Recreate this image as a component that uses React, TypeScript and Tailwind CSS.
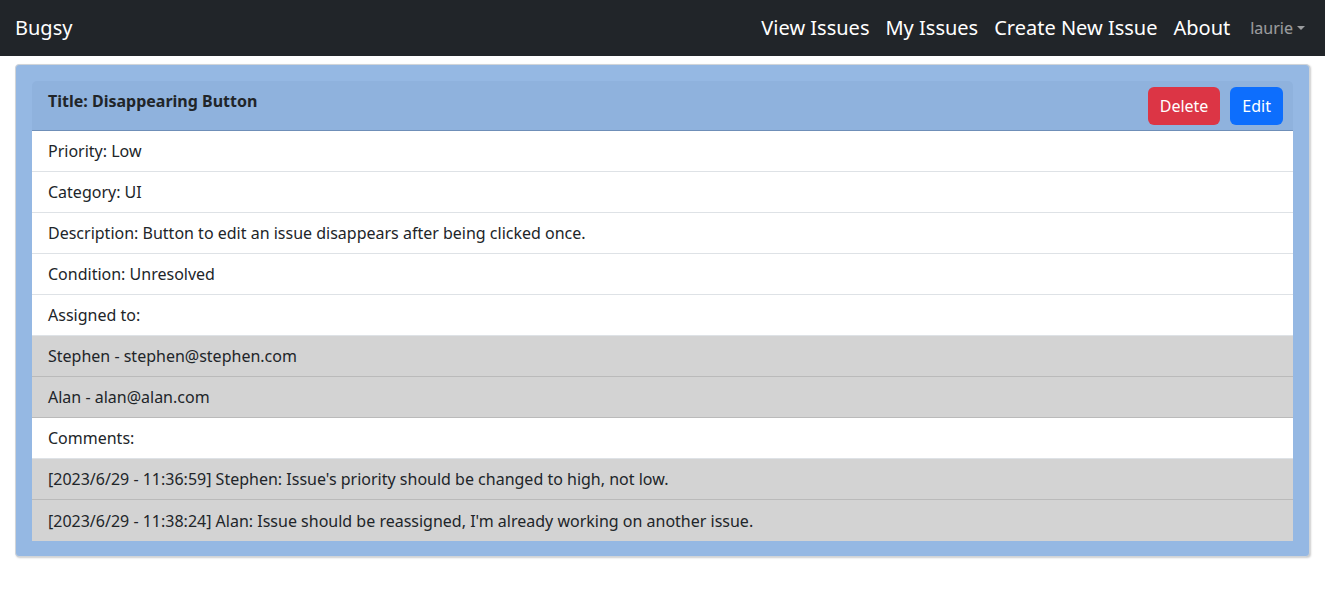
export default function App() {
  const rows: { text: string; grey?: boolean }[] = [
    { text: "Priority: Low" },
    { text: "Category: UI" },
    { text: "Description: Button to edit an issue disappears after being clicked once." },
    { text: "Condition: Unresolved" },
    { text: "Assigned to:" },
    { text: "Stephen - stephen@stephen.com", grey: true },
    { text: "Alan - alan@alan.com", grey: true },
    { text: "Comments:" },
    { text: "[2023/6/29 - 11:36:59] Stephen: Issue's priority should be changed to high, not low.", grey: true },
    { text: "[2023/6/29 - 11:38:24] Alan: Issue should be reassigned, I'm already working on another issue.", grey: true },
  ];

  return (
    <div className="min-h-[590px] bg-white text-[#212529] font-['Noto_Sans',sans-serif] text-base">
      <nav className="h-14 bg-[#212529] flex items-center justify-between pl-[15px] pr-[20px]">
        <span className="text-white text-xl">Bugsy</span>
        <div className="flex items-center text-white text-xl">
          <a className="px-2">View Issues</a>
          <a className="px-2">My Issues</a>
          <a className="px-2">Create New Issue</a>
          <a className="px-2">About</a>
          <span className="ml-3 text-base text-white/55 flex items-center">
            laurie
            <span className="ml-1 border-x-[4px] border-x-transparent border-t-[4px] border-t-white/55"></span>
          </span>
        </div>
      </nav>

      <div className="mt-2 mx-[15px] bg-[#95b8e3] border border-[#d0d4d8] rounded-sm shadow-[1px_1px_2px_rgba(0,0,0,0.2)] px-4 pt-4 pb-[15px]">
        <div className="rounded-t-[5px] overflow-hidden">
          <div className="h-[50px] bg-[#8fb2dd] border-b border-[#6f8fb8] flex items-start justify-between pl-4 pr-[10px]">
            <span className="font-bold pt-2 leading-6">Title: Disappearing Button</span>
            <div className="flex gap-[10px] pt-[6px]">
              <button className="h-[38px] px-3 rounded-md bg-[#dc3545] text-white">Delete</button>
              <button className="h-[38px] px-3 rounded-md bg-[#0d6efd] text-white">Edit</button>
            </div>
          </div>
          {rows.map((r, i) => (
            <div
              key={i}
              className={`h-[41px] px-4 flex items-center ${
                i < rows.length - 1 ? "border-b" : ""
              } ${r.grey ? "bg-[#d3d3d3] border-[#bababa]" : "bg-white border-[#dee2e6]"}`}
            >
              {r.text}
            </div>
          ))}
        </div>
      </div>
    </div>
  );
}
